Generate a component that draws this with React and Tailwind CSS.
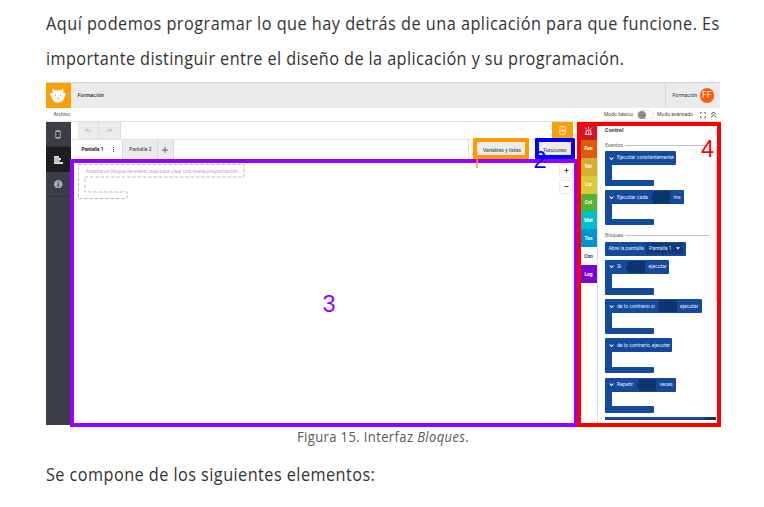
import React from 'react';

const CATEGORIES = [
  ['Fun', 'bg-[#dd5b0e] text-white'],
  ['Var', 'bg-[#d9ac35] text-white'],
  ['Lis', 'bg-[#d8cc35] text-white'],
  ['Col', 'bg-[#56b232] text-white'],
  ['Mat', 'bg-[#00c1c9] text-white'],
  ['Tex', 'bg-[#0095d0] text-white'],
  ['Con', 'bg-white text-[#134a9b]'],
  ['Log', 'bg-[#7a06d2] text-white'],
];

function Line({ className, children }) {
  return <p className={'origin-left whitespace-nowrap w-max ' + className}>{children}</p>;
}

function Heading({ children }) {
  return (
    <div className="flex items-center gap-[2px] h-[9px] w-[104.5px] text-[#666]">
      <span className="text-[5.1px]">{children}</span>
      <span className="h-px flex-1 bg-[#c4c4c4]" />
    </div>
  );
}

function Slot() {
  return (
    <span className="relative h-[12.5px] w-[17.5px] shrink-0 bg-[#0f356f]">
      <span className="absolute -left-[1.5px] top-[4px] h-[5px] w-[3px] rounded-l-full bg-[#0f356f]" />
    </span>
  );
}

function Block({ width, label, slot, after }) {
  return (
    <div className="h-[35px] w-[111px] shrink-0">
      <div className={'flex h-[14px] items-center whitespace-nowrap rounded-t-[1px] rounded-br-[1px] bg-[#134a9b] pl-[3.5px] text-[5.1px] text-[#e6ecf6] ' + width}>
        <svg viewBox="0 0 6 6" className="mr-[3.5px] h-[5px] w-[5px] shrink-0" fill="none" stroke="white" strokeWidth="1.3">
          <path d="M.7 1.8 3 4.2 5.3 1.8" />
        </svg>
        <span className={slot}>{label}</span>
        {after && <Slot />}
        {after && <span className="ml-[3.5px]">{after}</span>}
      </div>
      <div className="h-[14.5px] w-[6.7px] bg-[#134a9b]" />
      <div className="h-[6.5px] w-[49px] rounded-b-[1px] rounded-tr-[1px] bg-[#134a9b]" />
    </div>
  );
}

function Sidebar() {
  return (
    <nav className="flex w-[24.5px] shrink-0 flex-col bg-[#3b3d47] text-[#a9abb0]">
      <div className="flex h-[25px] items-center justify-center border-b border-[#30323a]">
        <svg viewBox="0 0 8 12" className="h-[9px] w-[6px]" fill="none" stroke="currentColor">
          <rect x="1" y="1" width="6" height="10" rx=".8" strokeWidth="1.2" />
          <path d="M1 1.7h6M1 10h6" strokeWidth="1.6" />
        </svg>
      </div>
      <div className="flex h-[25px] items-center justify-center bg-[#1d1e20] text-[#e0e0e0]">
        <svg viewBox="0 0 9 8" className="h-[8px] w-[9px]" fill="currentColor">
          <path d="M0 0h5v2H0zM0 2h7v2H0zM0 4h5.5v2H0zM0 6h9v2H0z" />
          <path d="M0 2h5M0 4h5M0 6h5" stroke="#1d1e20" strokeWidth=".3" />
        </svg>
      </div>
      <div className="flex h-[25px] items-center justify-center border-b border-[#30323a]">
        <svg viewBox="0 0 8 8" className="size-[8.5px]">
          <circle cx="4" cy="4" r="4" fill="#a9abb0" />
          <path d="M4 1.5v1.1M4 3.4v3.1" stroke="#3b3d47" strokeWidth="1.1" />
        </svg>
      </div>
    </nav>
  );
}

function Workspace() {
  return (
    <main className="flex min-w-0 flex-1 flex-col">
      <div className="flex h-[18px] border-b border-[#e2e2e2] pl-[7px]">
        {[false, true].map((flip) => (
          <div key={String(flip)} className="flex w-[21.5px] items-center justify-center border-r border-[#ddd] bg-[#ebebeb]">
            <svg viewBox="0 0 8 6" className={'h-[5px] w-[6px] ' + (flip ? '-scale-x-100' : '')} fill="none" stroke="#b0b0b0" strokeWidth="1">
              <path d="M3 .6.8 2.7 3 4.8M1 2.7h4.5q2 0 2 2.4" />
            </svg>
          </div>
        ))}
        <div className="ml-auto mr-[7.5px] flex w-[21px] items-center justify-center bg-[#f7a00a]">
          <svg viewBox="0 0 8 10" className="h-[9px] w-[7px]" fill="none" stroke="white" strokeWidth="1">
            <rect x="1" y=".6" width="6" height="8.8" rx=".6" />
            <path d="M3 3.2v3.6L6 5z" fill="white" stroke="none" />
          </svg>
        </div>
      </div>
      <div className="flex h-[19.5px] whitespace-nowrap border-b border-[#ddd] text-[5.05px] font-medium text-[#555]">
        <div className="flex w-[51.5px] items-center pl-[11px] pt-px text-[4.9px] font-bold text-[#222]">
          Pantalla 1
          <span className="ml-auto mr-[8.5px] flex flex-col gap-[1px]">
            <i className="size-[1px] bg-[#444]" /><i className="size-[1px] bg-[#444]" /><i className="size-[1px] bg-[#444]" />
          </span>
        </div>
        <div className="flex w-[35.5px] items-center border-x border-[#dadada] bg-[#ebebeb] pl-[6px] pt-px">Pantalla 2</div>
        <div className="flex w-[16px] items-center justify-center border-r border-[#dadada] bg-[#ebebeb] pt-px">
          <svg viewBox="0 0 6 6" className="size-[6px]" stroke="#555" strokeWidth=".9"><path d="M3 0v6M0 3h6" /></svg>
        </div>
        <div className="ml-auto flex border-l border-[#e2e2e2] pl-[7px]">
          <div className="flex w-[52px] items-center justify-center bg-[#ebebeb] pt-[2px]">Variables y listas</div>
          <div className="ml-[8px] mr-[6px] flex w-[38px] items-center justify-center bg-[#ebebeb] pt-[2px]">Funciones</div>
        </div>
      </div>
      <div className="flex flex-1 items-start justify-between pl-[7px] pt-[4.5px] pr-[8px]">
        <svg viewBox="0 0 168 36" className="h-[36px] w-[168px]" fill="none">
          <path d="M.5 .5H166V13H7V28H49V34.5H.5Z" stroke="#bbb" strokeWidth="1" strokeDasharray="3.5 1.8" />
          <text x="7.5" y="8.6" fontFamily="Roboto" fontStyle="italic" fontSize="5.5" fill="#b5b5b5" textLength="152">Arrastra un bloque de evento aquí para crear una nueva programación</text>
        </svg>
        <div className="mt-[0.5px] flex flex-col gap-[4px]">
          {['M3 .5v5M.5 3h5', 'M.5 3h5'].map((d) => (
            <div key={d} className="flex size-[12px] items-center justify-center rounded-[1px] bg-white shadow-[0_0_2px_rgba(0,0,0,0.3)]">
              <svg viewBox="0 0 6 6" className="size-[5px]" stroke="#333" strokeWidth="1.1"><path d={d} /></svg>
            </div>
          ))}
        </div>
      </div>
    </main>
  );
}

function Panel() {
  return (
    <aside className="flex w-[140px] shrink-0">
      <div className="flex w-[18px] shrink-0 flex-col border-r border-[#ddd] text-[4.9px] font-bold">
        <div className="flex h-[17.7px] items-center justify-center bg-[#cf1627]">
          <svg viewBox="0 0 10 10" className="size-[9px]" fill="none" stroke="white" strokeWidth="1">
            <path d="M.8 9.2h8.4M2.4 9V5.6a1 1 0 0 1 1-1h3.2a1 1 0 0 1 1 1V9M5 .8v2M1.3 1.8l1.3 1.4M8.7 1.8 7.4 3.2M5 6v2" />
          </svg>
        </div>
        {CATEGORIES.map(([name, color]) => (
          <div key={name} className={'flex h-[17.95px] items-center justify-center ' + color}>{name}</div>
        ))}
      </div>
      <div className="flex w-[122px] flex-col overflow-hidden pl-[7px]">
        <h2 className="mt-[4px] h-[9px] text-[5.4px] font-bold leading-[9px] tracking-[0.1px] text-[#333]">Control</h2>
        <div className="mt-[6px]"><Heading>Eventos</Heading></div>
        <div className="mt-[1px] flex flex-col gap-[4.4px]">
          <Block width="w-[70.5px]" label="Ejecutar constantemente" />
          <Block width="w-[79px]" label="Ejecutar cada" slot="w-[35.5px]" after="ms" />
        </div>
        <div className="mt-[6px]"><Heading>Bloques</Heading></div>
        <div className="mt-[1.2px] flex h-[14px] w-[81px] shrink-0 items-center whitespace-nowrap rounded-[1px] bg-[#134a9b] pl-[3.5px] text-[5.1px] text-[#e6ecf6]">
          Abre la pantalla
          <span className="ml-auto mr-[3px] flex h-[11px] w-[37px] items-center justify-between bg-[#0f3a7c] pl-[3px] pr-[3px]">
            Pantalla 1
            <svg viewBox="0 0 4 3" className="h-[3px] w-[4px]" fill="white"><path d="M0 .2h4L2 2.6z" /></svg>
          </span>
        </div>
        <div className="mt-[4.3px] flex flex-col gap-[4.3px]">
          <Block width="w-[64px]" label="Si" slot="w-[10.5px]" after="ejecutar" />
          <Block width="w-[96.5px]" label="de lo contrario si" slot="w-[42px]" after="ejecutar" />
          <Block width="w-[67px]" label="de lo contrario, ejecutar" />
          <Block width="w-[71px]" label="Repetir" slot="w-[21.5px]" after="veces" />
          <div className="h-[2.5px] w-[111px] bg-[#134a9b]"><div className="ml-auto h-full w-[11px] bg-[#0f356f]" /></div>
        </div>
      </div>
    </aside>
  );
}

function Figure() {
  return (
    <div className="relative ml-[46px] flex h-[343px] w-[674px] flex-col overflow-visible border-t border-[#d5cfe2] bg-white font-['Roboto',sans-serif] leading-none">
      <header className="flex h-[25px] shrink-0 items-stretch bg-[#ebebeb] text-[5.7px] text-[#333]">
        <div className="flex w-[24.5px] items-center justify-center bg-[#f7a00a]">
          <svg viewBox="0 0 16 15" className="h-[15px] w-[16px]">
            <path d="M3.2.3C3.6 2.2 5 2.5 6.3 2.3 7 2.1 9 2.1 9.7 2.3 11 2.5 12.4 2.2 12.8.3 13.7 1.8 13.6 3.5 13.1 4.6 14 5 15.3 5.1 15.7 4.9 15.9 6.8 15.3 8.2 14.5 8.8 14 12.5 11.3 14.7 8 14.7S2 12.5 1.5 8.8C.7 8.2.1 6.8.3 4.9.7 5.1 2 5 2.9 4.6 2.4 3.5 2.3 1.8 3.2.3Z" fill="white" />
            <path d="M5.5 6.8v1.4M10.5 6.8v1.4M7 10.2q1 .8 2 0" stroke="#f7a00a" strokeWidth="1" fill="none" />
          </svg>
        </div>
        <span className="ml-[7px] self-center font-medium italic">Formación</span>
        <div className="ml-auto flex items-center border-l border-[#d8d8d8] pl-[7px] pr-[6px] text-[5.15px]">
          Formación
          <span className="ml-[2.5px] flex size-[14.5px] items-center justify-center rounded-full bg-[#ff5a08] text-[8.5px] text-white">FF</span>
        </div>
      </header>
      <div className="flex h-[14px] shrink-0 items-center whitespace-nowrap border-b border-[#e0e0e0] pl-[7.5px] pr-[3.5px] text-[5.05px] text-[#444]">
        Archivo
        <span className="ml-auto">Modo básico</span>
        <span className="ml-[3.5px] flex h-[9px] w-[17px] items-center rounded-full border border-[#e4e4e4] bg-white"><i className="size-[8px] shrink-0 rounded-full bg-[#8b8b8d]" /></span>
        <span className="ml-[3.5px]">Modo avanzado</span>
        <svg viewBox="0 0 6 6" className="ml-[6.5px] size-[6px]" fill="none" stroke="#666" strokeWidth=".8"><path d="M2 .5H.5V2M4 .5h1.5V2M2 5.5H.5V4M4 5.5h1.5V4" /></svg>
        <svg viewBox="0 0 6 6" className="ml-[4px] size-[7px]" fill="none" stroke="#333" strokeWidth=".8"><path d="M.8 3 3 .8 5.2 3M.8 5.5 3 3.3 5.2 5.5" /></svg>
      </div>
      <div className="flex min-h-0 flex-1">
        <Sidebar />
        <Workspace />
        <Panel />
      </div>
      <Annotations />
    </div>
  );
}

function Annotations() {
  const digit = "absolute font-['Liberation_Sans',sans-serif] text-[23.5px] leading-[23px] ";
  return (
    <>
      <div className="absolute left-[23.5px] top-[76px] h-[268px] w-[508.5px] border-4 border-[#9600ff]" />
      <div className="absolute left-[427px] top-[55px] h-[21px] w-[56px] rounded-[1px] border-4 border-[#ff9900]" />
      <div className="absolute left-[489px] top-[55px] h-[21px] w-[40px] rounded-[1px] border-4 border-[#0000ff]" />
      <div className="absolute left-[670px] top-[63px] h-[155px] w-[1.5px] bg-[#c8c8c8]" />
      <div className="absolute left-[531px] top-[39px] h-[305px] w-[144px] border-4 border-[#ff0000]" />
      <span className="absolute left-[424px] top-[66px] font-['Roboto',sans-serif] text-[22.5px] font-light leading-[23px] text-[#ff9900]">1</span>
      <span className={digit + 'left-[487.5px] top-[66px] text-[#0000ff]'}>2</span>
      <span className={digit + 'left-[276.5px] top-[210px] text-[#9600ff]'}>3</span>
      <span className={digit + 'left-[655px] top-[55px] text-[#ff0000]'}>4</span>
    </>
  );
}

export default function App() {
  return (
    <div className="h-[507px] w-[764px] overflow-hidden bg-white font-['Open_Sans',sans-serif] text-[#333]">
      <div className="h-[82px] pl-[46px] pt-[5px] text-[17.5px] leading-[36px]">
        <Line className="scale-x-[0.93] tracking-[0.51px]">Aquí podemos programar lo que hay detrás de una aplicación para que funcione. Es</Line>
        <Line className="-mt-px scale-x-[0.93] tracking-[0.44px]">importante distinguir entre el diseño de la aplicación y su programación.</Line>
      </div>
      <Figure />
      <div className="h-[26px] pl-[297px] text-[14px] leading-[24px] text-[#5a5a5a]">
        <Line className="scale-x-[0.93] tracking-[0.4px]">Figura 15. Interfaz <em>Bloques</em>.</Line>
      </div>
      <div className="pl-[46px] pt-[5px] text-[17.5px] leading-[36px]">
        <Line className="scale-x-[0.93] tracking-[0.47px]">Se compone de los siguientes elementos:</Line>
      </div>
    </div>
  );
}
